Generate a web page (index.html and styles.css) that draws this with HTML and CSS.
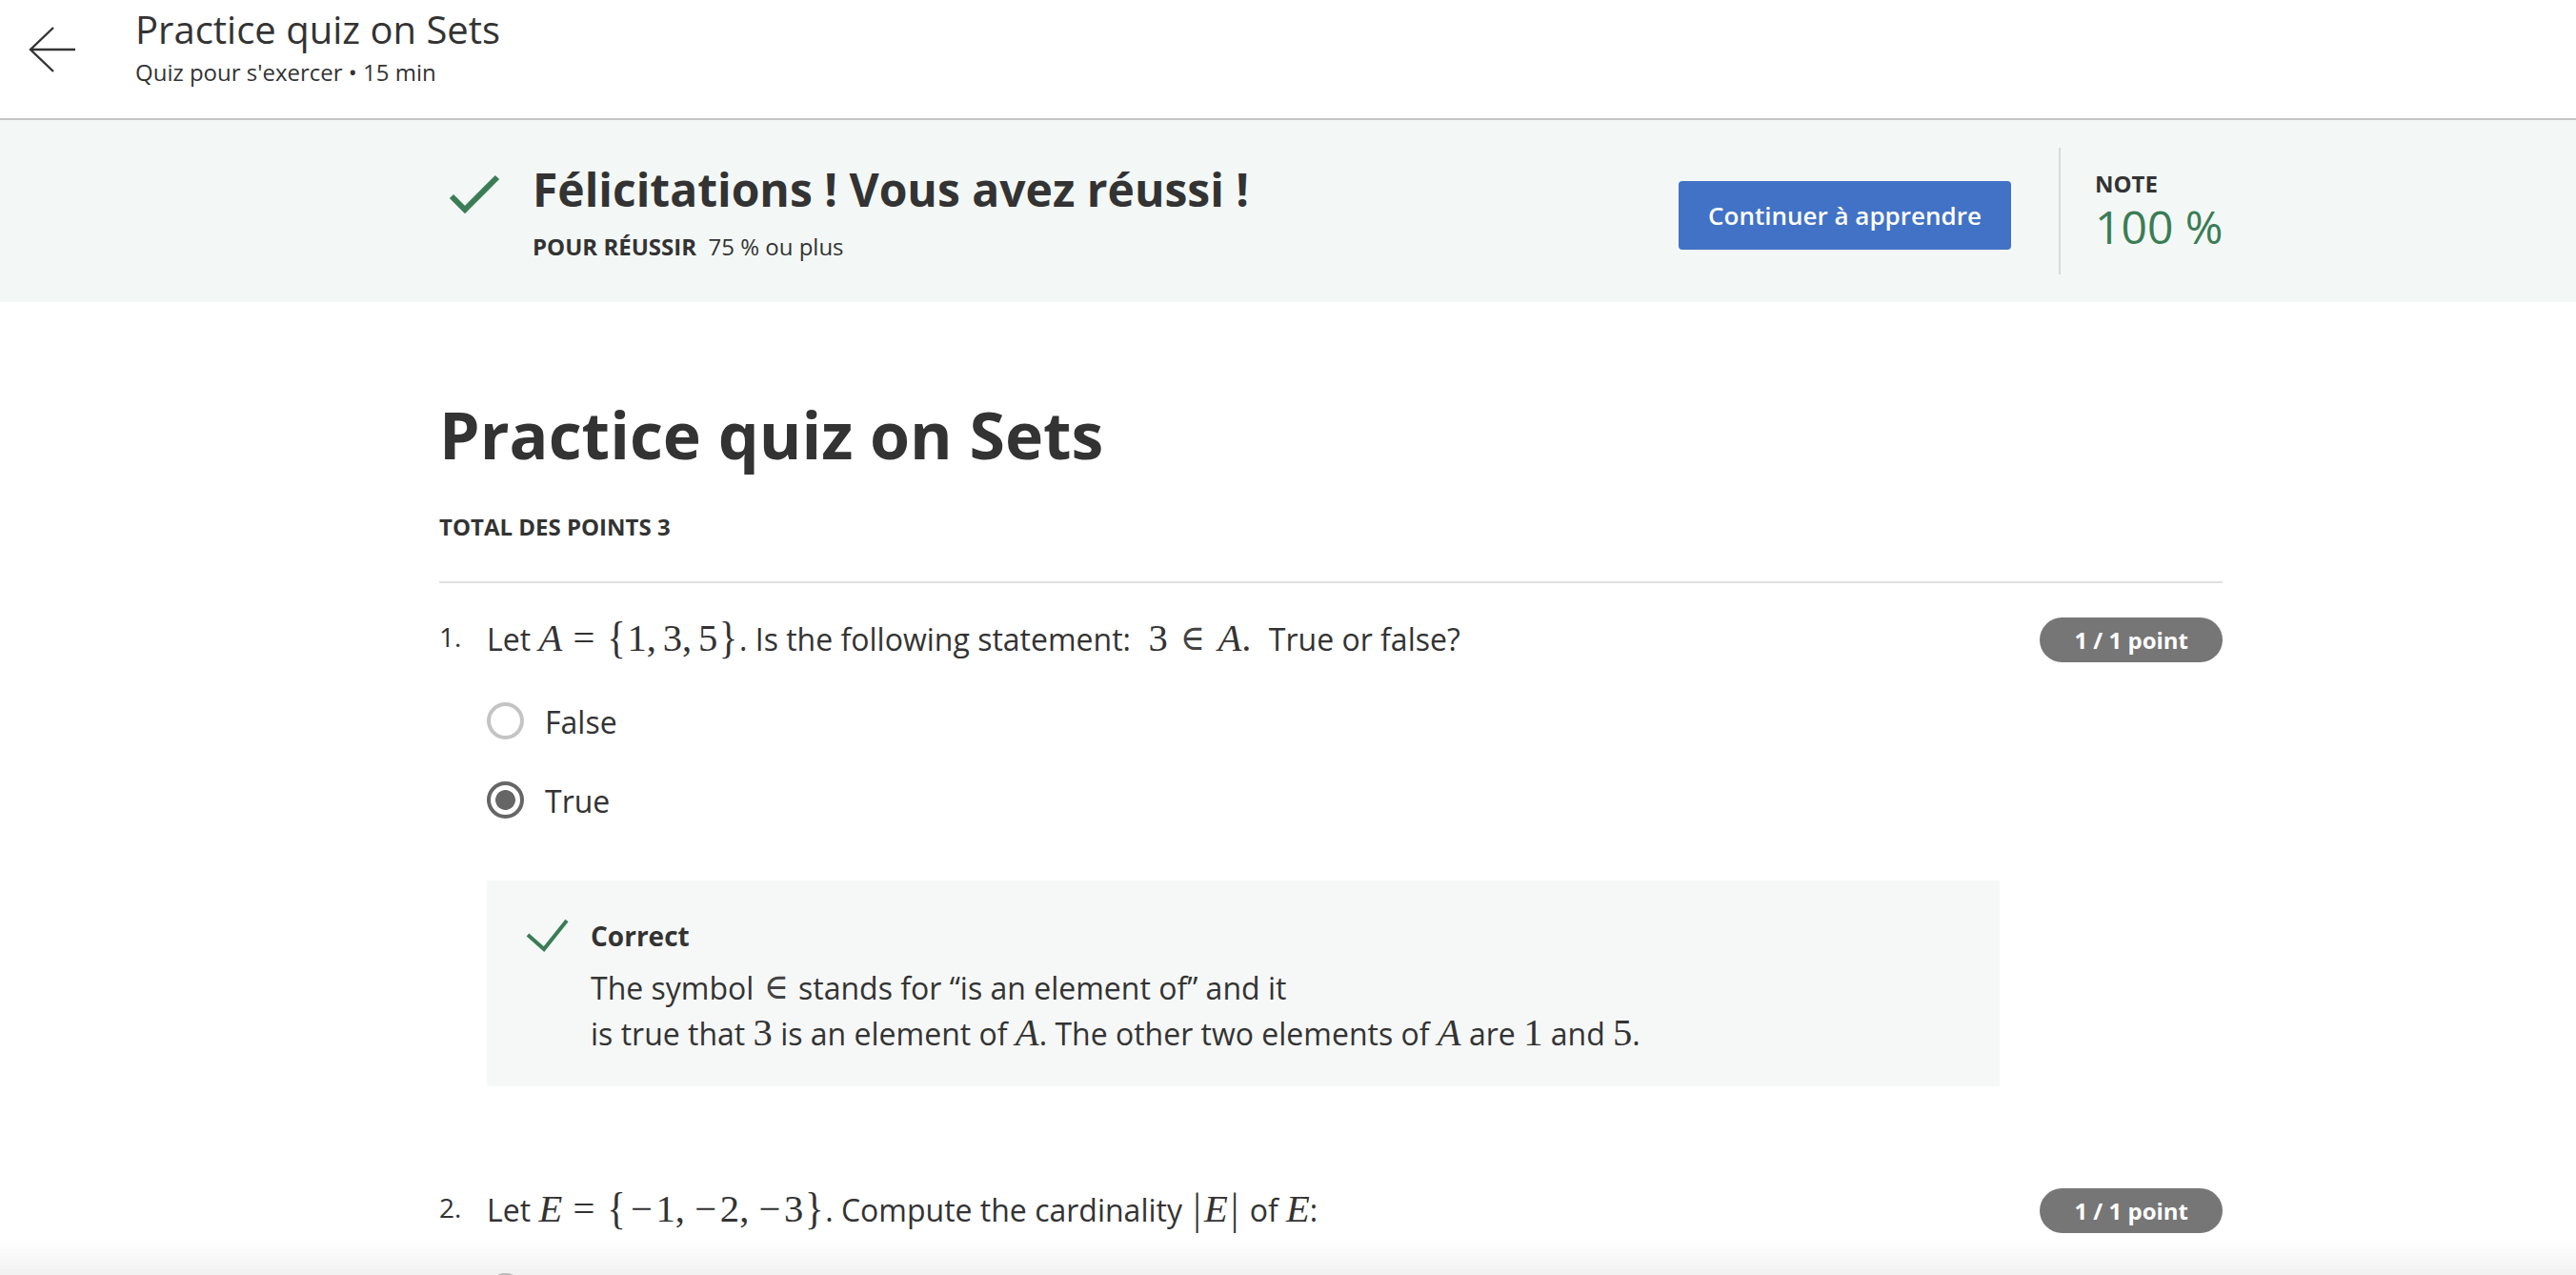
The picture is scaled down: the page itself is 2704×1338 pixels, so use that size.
FILE: index.html
```html
<!DOCTYPE html>
<html lang="fr">
<head>
<meta charset="utf-8">
<title>Practice quiz on Sets</title>
<link rel="stylesheet" href="styles.css">
</head>
<body>
<header class="topbar">
  <a class="back" aria-label="Retour">
    <svg width="56" height="56" viewBox="0 0 56 56"><path d="M51 26H4M28 3L4 26L28 49" fill="none" stroke="#333" stroke-width="2.4"/></svg>
  </a>
  <div class="titles">
    <div class="t1">Practice quiz on Sets</div>
    <div class="t2">Quiz pour s'exercer • 15 min</div>
  </div>
</header>

<section class="banner">
  <div class="banner-inner">
    <svg class="bcheck" width="60" height="60" viewBox="0 0 60 60"><polyline points="6,37 20,51 54,17" fill="none" stroke="#3a7d55" stroke-width="6"/></svg>
    <div class="bmsg">
      <h2>Félicitations ! Vous avez réussi !</h2>
      <p><b>POUR RÉUSSIR</b>&nbsp; 75 % ou plus</p>
    </div>
    <button class="btn">Continuer à apprendre</button>
    <div class="vsep"></div>
    <div class="grade">
      <div class="gl">NOTE</div>
      <div class="gv">100 %</div>
    </div>
  </div>
</section>

<main class="content">
  <h1>Practice quiz on Sets</h1>
  <div class="total">TOTAL DES POINTS 3</div>
  <div class="rule"></div>

  <div class="q">
    <div class="qhead">
      <span class="qnum">1.</span>
      <div class="qtext">Let <span class="m"><i>A</i><span class="rel">=</span><span class="br">{</span>1,<span class="pu"></span>3,<span class="pu"></span>5<span class="br">}</span></span>. Is the following statement: <span class="m">&nbsp;3<span class="rel"><span class="in">∈</span></span><i>A</i>.&nbsp;</span> True or false?</div>
      <span class="pill">1 / 1 point</span>
    </div>
    <div class="opts">
      <div class="opt"><span class="radio"></span><span class="olabel">False</span></div>
      <div class="opt"><span class="radio on"></span><span class="olabel">True</span></div>
    </div>
    <div class="fb">
      <svg class="fcheck" width="44" height="36" viewBox="0 0 44 36"><polyline points="2,18 19,33 43,3" fill="none" stroke="#3a7d55" stroke-width="4"/></svg>
      <div class="fbody">
        <div class="fhead">Correct</div>
        <div class="ftext">The symbol <span class="m"><span class="in">∈</span></span> stands for “is an element of” and it<br>is true that <span class="m">3</span> is an element of <span class="m"><i>A</i></span>. The other two elements of <span class="m"><i>A</i></span> are <span class="m">1</span> and <span class="m">5</span>.</div>
      </div>
    </div>
  </div>

  <div class="q">
    <div class="qhead">
      <span class="qnum">2.</span>
      <div class="qtext">Let <span class="m"><i>E</i><span class="rel">=</span><span class="br">{</span><span class="mn">−</span>1,<span class="pu"></span><span class="mn">−</span>2,<span class="pu"></span><span class="mn">−</span>3<span class="br">}</span></span>. Compute the cardinality <span class="m"><span class="bar">|</span><i>E</i><span class="bar">|</span></span> of <span class="m"><i>E</i></span>:</div>
      <span class="pill">1 / 1 point</span>
    </div>
    <div class="opts">
      <div class="opt"><span class="radio"></span></div>
    </div>
  </div>
</main>

<div class="fade"></div>
</body>
</html>
```

FILE: styles.css
```css
* { box-sizing: border-box; }

html, body {
  margin: 0;
  padding: 0;
  background: #fff;
}

body {
  font-family: "Open Sans", "Noto Sans", sans-serif;
  color: #333;
  overflow: hidden;
}

/* top bar */
.topbar {
  display: flex;
  align-items: flex-start;
  height: 126px;
  border-bottom: 2px solid #c6c6c6;
  padding-left: 28px;
}

.back {
  display: block;
  width: 56px;
  height: 56px;
  margin-top: 26px;
}

.back svg { display: block; }

.titles {
  margin-left: 58px;
  padding-top: 5px;
}

.t1 {
  font-size: 40px;
  line-height: 52px;
  color: #333;
}

.t2 {
  font-size: 24px;
  line-height: 32px;
  margin-top: 3px;
  color: #333;
}

/* success banner */
.banner {
  background: #f3f8f6;
  height: 191px;
}

.banner-inner {
  display: flex;
  align-items: center;
  height: 191px;
  width: 1872px;
  margin-left: 461px;
}

.bcheck {
  align-self: flex-start;
  margin-top: 43px;
  margin-left: 7px;
  flex: none;
}

.bmsg {
  flex: 1;
  margin-left: 31px;
}

.bmsg h2 {
  margin: 0;
  font-size: 48px;
  line-height: 60px;
  font-weight: 700;
  color: #333;
}

.bmsg p {
  margin: 14px 0 0;
  font-size: 24px;
  line-height: 32px;
  color: #333;
}

.bmsg p b { font-weight: 700; }

.btn {
  flex: none;
  width: 349px;
  height: 72px;
  margin-top: 9px;
  border: 0;
  border-radius: 4px;
  background: #4172c6;
  color: #fff;
  font-family: "Open Sans", sans-serif;
  font-size: 26px;
  font-weight: 600;
  padding: 0;
}

.vsep {
  flex: none;
  width: 2px;
  height: 133px;
  background: #dadada;
  margin: 0 36px 0 50px;
}

.grade {
  flex: none;
  width: 134px;
  white-space: nowrap;
  margin-top: 7px;
}

.gl {
  font-size: 24px;
  line-height: 26px;
  font-weight: 700;
  color: #333;
}

.gv {
  font-size: 48px;
  line-height: 64px;
  color: #3a7d55;
}

/* main content */
.content {
  width: 1872px;
  margin-left: 461px;
}

.content h1 {
  margin: 99px 0 0;
  font-size: 68px;
  line-height: 80px;
  font-weight: 700;
  color: #333;
}

.total {
  margin-top: 42px;
  font-size: 24px;
  line-height: 30px;
  font-weight: 700;
}

.rule {
  margin-top: 42px;
  height: 2px;
  background: #e0e0e0;
}

.q {
  padding-top: 35px;
}

.q + .q {
  margin-top: 71px;
}

.qhead {
  display: flex;
  align-items: flex-start;
}

.qnum {
  flex: none;
  width: 50px;
  font-size: 28px;
  line-height: 40px;
  margin-top: 1px;
}

.qtext {
  flex: 1;
  font-size: 32px;
  line-height: 48px;
}

.pill {
  flex: none;
  margin-top: 1px;
  height: 47px;
  line-height: 47px;
  padding: 0 36px;
  border-radius: 24px;
  background: #767676;
  color: #fff;
  font-size: 24px;
  font-weight: 700;
}

.m {
  font-family: "Liberation Serif", "DejaVu Serif", serif;
  font-size: 1.27em;
  line-height: 1;
}

.m i { font-style: italic; }

.rel { margin: 0 0.2778em; }

.pu { margin-right: 0.1667em; }

.br {
  display: inline-block;
  transform: scaleY(1.12);
  margin: 0 0.04em;
}

.mn {
  display: inline-block;
  width: 0.74em;
  text-align: center;
}

.bar {
  display: inline-block;
  margin: 0 0.08em;
  transform: scaleY(1.15);
}

.in {
  display: inline-block;
  font-family: "DejaVu Serif", serif;
  font-weight: 400;
  color: #444;
  transform: scale(0.86, 0.92);
}

.opts {
  padding-left: 50px;
  margin-top: 39px;
  display: flex;
  flex-direction: column;
  gap: 35px;
}

.opt {
  display: flex;
  align-items: center;
  height: 48px;
}

.olabel {
  font-size: 32px;
  line-height: 48px;
}

.radio {
  flex: none;
  width: 39px;
  height: 39px;
  margin: -4px 22px 0 0;
  border: 4px solid #c4c4c4;
  border-radius: 50%;
  background: #fff;
}

.radio.on {
  border-color: #666;
  background: radial-gradient(circle, #666 0 10px, #fff 10.8px);
}

/* feedback */
.fb {
  display: flex;
  align-items: flex-start;
  margin: 59px 0 0 50px;
  width: 1588px;
  padding: 39px 40px 31px 41px;
  background: #f6f8f7;
}

.fcheck {
  flex: none;
  overflow: visible;
}

.fbody {
  margin-left: 24px;
}

.fhead {
  font-size: 28px;
  line-height: 36px;
  font-weight: 700;
  margin-top: 1px;
}

.ftext {
  margin-top: 13px;
  font-size: 32px;
  line-height: 48px;
}

.fade {
  position: fixed;
  left: 0;
  right: 0;
  bottom: 0;
  height: 40px;
  background: linear-gradient(to bottom, rgba(0, 0, 0, 0), rgba(0, 0, 0, 0.05));
  pointer-events: none;
}
```
